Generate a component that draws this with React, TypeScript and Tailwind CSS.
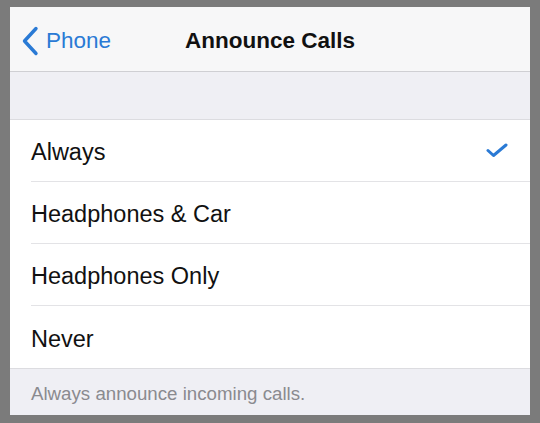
const options = ['Always', 'Headphones & Car', 'Headphones Only', 'Never'];

function BackChevron() {
  return (
    <svg width="18" height="30" viewBox="0 0 18 30" fill="none">
      <path d="M15 2.5 L3.5 15 L15 27.5" stroke="#2a7ad5" strokeWidth="3.4" strokeLinecap="round" strokeLinejoin="round" />
    </svg>
  );
}

function Check() {
  return (
    <svg width="22" height="15" viewBox="0 0 22 15" fill="none">
      <path d="M2 7.5 L7.5 12.5 L20 2" stroke="#2a7ad5" strokeWidth="3" strokeLinecap="round" strokeLinejoin="round" />
    </svg>
  );
}

export default function App() {
  const selected = 'Always';

  return (
    <div className="w-[540px] h-[423px] bg-[#7b7b7b] pt-[7px] pl-[10px] font-['Liberation_Sans',Arial,sans-serif]">
      <div className="w-[520px] h-[408px] flex flex-col bg-[#efeff4] overflow-hidden">
        {/* Nav bar */}
        <div className="relative h-[65px] shrink-0 bg-[#f7f7f8] border-b border-[#cfcfd3] flex items-center justify-center">
          <div className="absolute left-[11px] top-0 h-full flex items-center gap-[7px] pt-[4px]">
            <BackChevron />
            <span className="text-[22.5px] text-[#2a7ad5]">Phone</span>
          </div>
          <span className="text-[22.5px] font-bold text-[#111] pt-[4px]">Announce Calls</span>
        </div>

        {/* Spacer section */}
        <div className="h-[48px] shrink-0 bg-[#efeff4] border-b border-[#dcdce0]" />

        {/* Options */}
        <div className="bg-white">
          {options.map((opt, i) => (
            <div key={opt} className="h-[62px] pl-[21px]">
              <div
                className={
                  i < options.length - 1
                    ? 'h-full flex items-center justify-between pr-[22px] border-b border-[#e3e3e6]'
                    : 'h-full flex items-center justify-between pr-[22px]'
                }
              >
                <span className="text-[23.5px] text-[#111] pt-[5px]">{opt}</span>
                {opt === selected && <Check />}
              </div>
            </div>
          ))}
        </div>

        {/* Footer */}
        <div className="flex-1 border-t border-[#dcdce0] bg-[#efeff4] pl-[21px] pt-[11px]">
          <span className="text-[18.7px] text-[#8a8a8f]">Always announce incoming calls.</span>
        </div>
      </div>
    </div>
  );
}
